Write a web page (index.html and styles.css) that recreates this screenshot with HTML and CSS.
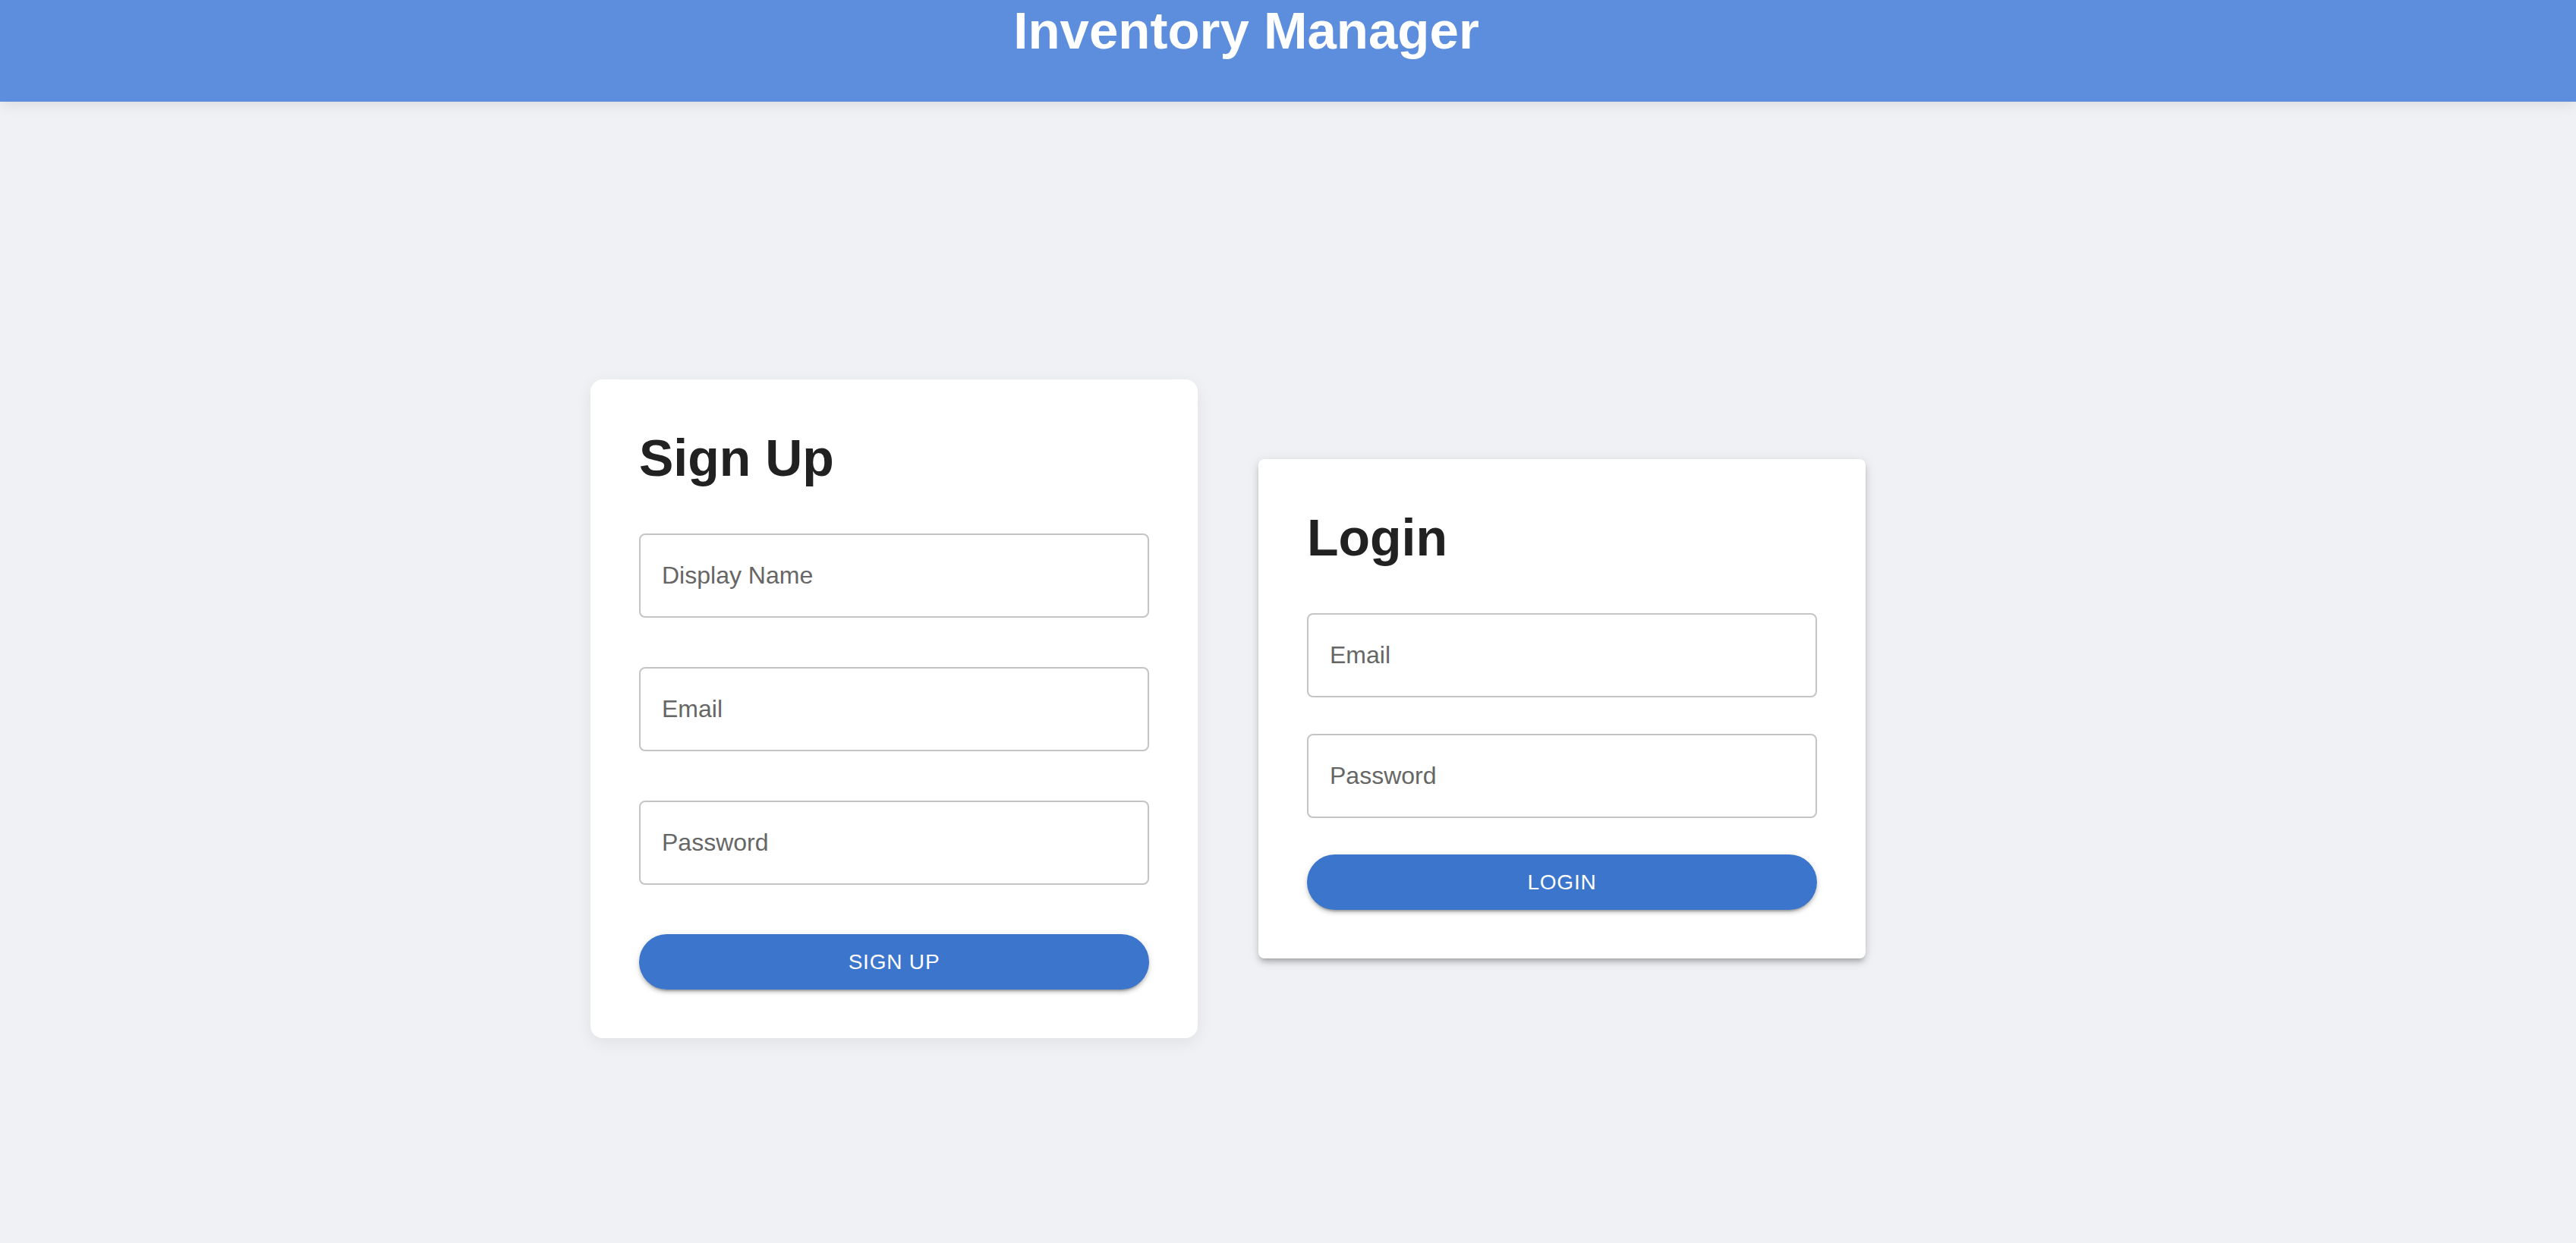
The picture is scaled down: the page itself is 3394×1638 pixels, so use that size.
FILE: index.html
```html
<!DOCTYPE html>
<html lang="en">
<head>
<meta charset="utf-8">
<title>Inventory Manager</title>
<link rel="stylesheet" href="styles.css">
</head>
<body>
<header class="topbar">
  <h1 class="brand">Inventory Manager</h1>
</header>
<main class="auth">
  <section class="card card-signup">
    <h2 class="card-title">Sign Up</h2>
    <form class="form form-signup">
      <div class="field"><span class="label">Display Name</span></div>
      <div class="field"><span class="label">Email</span></div>
      <div class="field"><span class="label">Password</span></div>
      <button type="button" class="btn">SIGN UP</button>
    </form>
  </section>
  <section class="card card-login">
    <h2 class="card-title">Login</h2>
    <form class="form form-login">
      <div class="field"><span class="label">Email</span></div>
      <div class="field"><span class="label">Password</span></div>
      <button type="button" class="btn">LOGIN</button>
    </form>
  </section>
</main>
</body>
</html>
```

FILE: styles.css
```css
* { box-sizing: border-box; }
html, body { margin: 0; padding: 0; }
body {
  background: #f0f1f5;
  font-family: "Liberation Sans", Arial, Helvetica, sans-serif;
  min-height: 1638px;
}
.topbar {
  height: 134px;
  background: #5d8edd;
  padding: 2px 110px 0 0;
  text-align: center;
  box-shadow: 0 4px 18px rgba(0, 0, 0, 0.09);
  position: relative;
  z-index: 1;
}
.brand {
  margin: 0;
  color: #ffffff;
  font-size: 69px;
  line-height: 78px;
  font-weight: 700;
}
.auth {
  display: flex;
  justify-content: center;
  align-items: center;
  gap: 80px;
  padding: 366px 158px 0 0;
}
.card {
  width: 800px;
  background: #ffffff;
  padding: 64px;
}
.card-signup {
  border-radius: 16px;
  box-shadow: 0 6px 22px rgba(0, 0, 0, 0.07);
}
.card-login {
  border-radius: 8px;
  box-shadow: 0 6px 6px -4px rgba(0,0,0,0.2), 0 6px 8px 0 rgba(0,0,0,0.12), 0 2px 16px 0 rgba(0,0,0,0.1);
}
.card-title {
  margin: 0 0 61px;
  font-size: 68px;
  line-height: 78px;
  font-weight: 700;
  color: #212121;
}
.form {
  display: flex;
  flex-direction: column;
}
.form-signup { gap: 65px; }
.form-login { gap: 48px; }
.field {
  height: 111px;
  border: 2px solid #c4c4c4;
  border-radius: 8px;
  display: flex;
  align-items: center;
  padding: 0 28px;
}
.label {
  font-size: 32px;
  color: #666666;
}
.btn {
  height: 73px;
  border: none;
  border-radius: 37px;
  background: #3b75cc;
  color: #ffffff;
  font-family: "Liberation Sans", Arial, sans-serif;
  font-size: 28px;
  font-weight: 500;
  letter-spacing: 0.8px;
  box-shadow: 0 6px 2px -4px rgba(0,0,0,0.2), 0 4px 4px 0 rgba(0,0,0,0.14), 0 2px 10px 0 rgba(0,0,0,0.12);
  cursor: pointer;
}
```
